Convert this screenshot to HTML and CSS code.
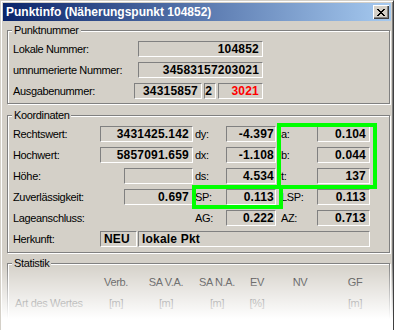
FILE: index.html
```html
<!DOCTYPE html>
<html lang="de">
<head>
    <meta charset="UTF-8">
    <title>Punktinfo</title>
    <link rel="stylesheet" href="styles.css">
</head>
<body>
<div class="window">
    <div class="titlebar">
        <span class="title">Punktinfo (Näherungspunkt 104852)</span>
        <span class="close-btn">
            <svg width="8" height="7" viewBox="0 0 8 7" shape-rendering="crispEdges">
                <rect x="0" y="0" width="2" height="1"/><rect x="6" y="0" width="2" height="1"/>
                <rect x="1" y="1" width="2" height="1"/><rect x="5" y="1" width="2" height="1"/>
                <rect x="2" y="2" width="4" height="1"/>
                <rect x="3" y="3" width="2" height="1"/>
                <rect x="2" y="4" width="4" height="1"/>
                <rect x="1" y="5" width="2" height="1"/><rect x="5" y="5" width="2" height="1"/>
                <rect x="0" y="6" width="2" height="1"/><rect x="6" y="6" width="2" height="1"/>
            </svg>
        </span>
    </div>

    <div class="client">
        <!-- Punktnummer -->
        <div class="group group-nr">
            <div class="caption">Punktnummer</div>
            <div class="row">
                <span class="label nr-label">Lokale Nummer:</span>
                <span class="field nr-field">104852</span>
            </div>
            <div class="row">
                <span class="label nr-label">umnumerierte Nummer:</span>
                <span class="field nr-field">34583157203021</span>
            </div>
            <div class="row">
                <span class="label ausg-label">Ausgabenummer:</span>
                <span class="field ausg-1">34315857</span>
                <span class="field ausg-2">2</span>
                <span class="field ausg-3 red">3021</span>
            </div>
        </div>

        <!-- Koordinaten -->
        <div class="group group-koord">
            <div class="caption">Koordinaten</div>
            <div class="koord-grid">
                <span class="label">Rechtswert:</span>
                <span class="field">3431425.142</span>
                <span class="label mid-label">dy:</span>
                <span class="field mid">-4.397</span>
                <span class="label right-label">a:</span>
                <span class="field">0.104</span>

                <span class="label">Hochwert:</span>
                <span class="field">5857091.659</span>
                <span class="label mid-label">dx:</span>
                <span class="field mid">-1.108</span>
                <span class="label right-label">b:</span>
                <span class="field">0.044</span>

                <span class="label">Höhe:</span>
                <span class="field short"></span>
                <span class="label mid-label">ds:</span>
                <span class="field mid">4.534</span>
                <span class="label right-label">t:</span>
                <span class="field">137</span>

                <span class="label">Zuverlässigkeit:</span>
                <span class="field short">0.697</span>
                <span class="label mid-label">SP:</span>
                <span class="field mid">0.113</span>
                <span class="label right-label">LSP:</span>
                <span class="field">0.113</span>

                <span class="label">Lageanschluss:</span>
                <span></span>
                <span class="label mid-label">AG:</span>
                <span class="field mid">0.222</span>
                <span class="label right-label">AZ:</span>
                <span class="field">0.713</span>

                <span class="label">Herkunft:</span>
                <div class="herkunft">
                    <span class="field left neu">NEU</span>
                    <span class="field left wide">lokale Pkt</span>
                </div>
            </div>
        </div>

        <!-- Statistik -->
        <div class="group group-stat">
            <div class="caption">Statistik</div>
            <div class="stat-grid">
                <span></span>
                <span>Verb.</span>
                <span>SA V.A.</span>
                <span>SA N.A.</span>
                <span>EV</span>
                <span>NV</span>
                <span>GF</span>

                <span class="stat-label">Art des Wertes</span>
                <span>[m]</span>
                <span>[m]</span>
                <span>[m]</span>
                <span>[%]</span>
                <span></span>
                <span>[m]</span>
            </div>
        </div>
    </div>

    <!-- Markierungen -->
    <div class="mark mark-abt"></div>
    <div class="mark mark-sp"></div>

    <div class="fade"></div>
</div>
</body>
</html>
```

FILE: styles.css
```css
body {
    margin: 0;
    background: #fff;
    font-family: "Liberation Sans", Arial, sans-serif;
    font-size: 11px;
    letter-spacing: -0.35px;
    color: #000;
    overflow: hidden;
}

.window {
    position: relative;
    width: 394px;
    height: 340px;
    box-sizing: border-box;
    padding: 2px;
    background: #d4d0c8;
    border: 1px solid;
    border-color: #d4d0c8 #404040 #404040 #d4d0c8;
    box-shadow: inset 1px 1px 0 #fff, inset -1px -1px 0 #808080;
    overflow: hidden;
}

.titlebar {
    display: flex;
    align-items: center;
    height: 18px;
    padding-left: 3px;
    background: linear-gradient(to right, #0a246a, #a6caf0);
}

.title {
    font-size: 12px;
    font-weight: bold;
    letter-spacing: 0;
    color: #fff;
}

.close-btn {
    display: flex;
    align-items: center;
    justify-content: center;
    width: 16px;
    height: 14px;
    margin-left: auto;
    margin-right: 2px;
    background: #d4d0c8;
    box-sizing: border-box;
    box-shadow: inset 1px 1px 0 #fff, inset -1px -1px 0 #404040, inset -2px -2px 0 #808080;
}

.client {
    padding-top: 9px;
}

.group {
    width: 383px;
    margin-left: 4px;
    box-sizing: border-box;
    padding: 0 4px 4px 4px;
    border: 1px solid #808080;
    box-shadow: 1px 1px 0 #fff, inset 1px 1px 0 #fff;
}

.group-koord {
    margin-top: 11px;
    padding-bottom: 5px;
}

.group-stat {
    margin-top: 10px;
    height: 80px;
}

.caption {
    display: table;
    margin-top: -7px;
    padding: 0 2px;
    line-height: 13px;
    background: #d4d0c8;
}

.row {
    display: flex;
    height: 16px;
    margin-top: 4px;
}

.row + .row {
    margin-top: 5px;
}

.label {
    line-height: 16px;
    padding-left: 1px;
    white-space: nowrap;
}

.field {
    height: 16px;
    box-sizing: border-box;
    padding-right: 3px;
    border: 1px solid;
    border-color: #808080 #fff #fff #808080;
    font-size: 12px;
    font-weight: bold;
    letter-spacing: 0.2px;
    line-height: 14px;
    text-align: right;
    white-space: nowrap;
}

.nr-label {
    width: 125px;
}

.nr-field {
    width: 125px;
}

.ausg-label {
    width: 121px;
}

.ausg-1 {
    width: 68px;
}

.ausg-2 {
    width: 12px;
    margin-left: 2px;
}

.ausg-3 {
    width: 45px;
    margin-left: 2px;
}

.red {
    color: #ff0000;
}

.koord-grid {
    display: grid;
    grid-template-columns: 88px 93px 33px 50px 41px 53px;
    grid-auto-rows: 16px;
    row-gap: 5px;
    margin-top: 4px;
}

.mid-label {
    padding-left: 2px;
}

.right-label {
    padding-left: 5px;
}

.field.mid {
    padding-right: 1px;
}

.field.short {
    width: 69px;
    justify-self: end;
}

.herkunft {
    grid-column: 2 / -1;
    display: flex;
    gap: 1px;
}

.field.left {
    text-align: left;
    padding-left: 3px;
}

.neu {
    width: 37px;
}

.wide {
    flex: 1;
}

.stat-grid {
    display: grid;
    grid-template-columns: 79px 50px 50px 52px 28px 58px 52px;
    grid-auto-rows: 16px;
    row-gap: 5px;
    margin-top: 4px;
    line-height: 16px;
    text-align: center;
    color: #222;
}

.stat-label {
    text-align: left;
    padding-left: 3px;
}

.mark {
    position: absolute;
    box-sizing: border-box;
    border: 4px solid #00ff00;
}

.mark-abt {
    left: 276px;
    top: 122px;
    width: 100px;
    height: 66px;
}

.mark-sp {
    left: 191px;
    top: 184px;
    width: 91px;
    height: 24px;
}

.fade {
    position: absolute;
    left: 0;
    right: 0;
    top: 262px;
    bottom: 0;
    background: linear-gradient(rgba(255, 255, 255, 0), #fff 56px);
}
```
